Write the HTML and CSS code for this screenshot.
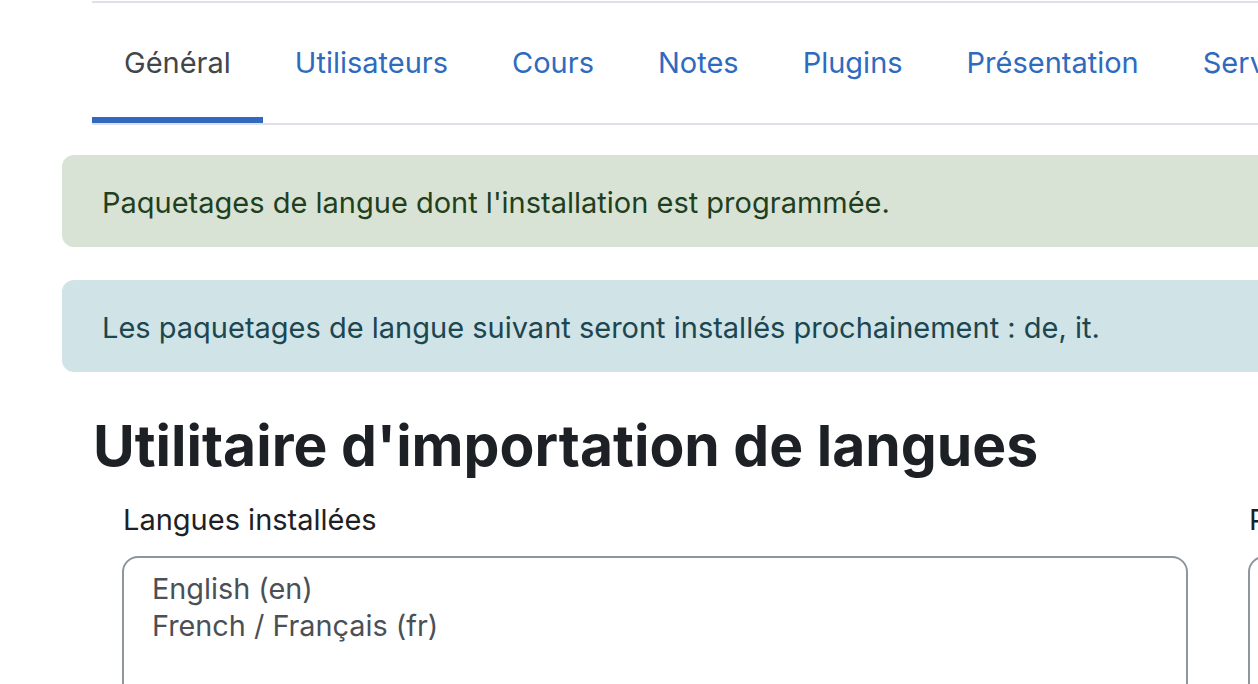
FILE: index.html
```html
<!DOCTYPE html>
<html lang="fr">
<head>
    <meta charset="UTF-8">
    <meta name="viewport" content="width=device-width, initial-scale=1.0">
    <title>Utilitaire d'importation de langues</title>
    <link rel="stylesheet" href="styles.css">
</head>
<body>
    <div class="page">
        <nav class="secondary-nav">
            <ul class="nav-tabs">
                <li><a class="nav-link active" href="#">Général</a></li>
                <li><a class="nav-link" href="#">Utilisateurs</a></li>
                <li><a class="nav-link" href="#">Cours</a></li>
                <li><a class="nav-link" href="#">Notes</a></li>
                <li><a class="nav-link" href="#">Plugins</a></li>
                <li><a class="nav-link" href="#">Présentation</a></li>
                <li><a class="nav-link" href="#">Serveur</a></li>
                <li><a class="nav-link" href="#">Rapports</a></li>
            </ul>
        </nav>

        <main class="main">
            <div class="alert alert-success">Paquetages de langue dont l'installation est programmée.</div>
            <div class="alert alert-info">Les paquetages de langue suivant seront installés prochainement : de, it.</div>

            <h2 class="page-title">Utilitaire d'importation de langues</h2>

            <div class="lang-row">
                <div class="lang-col">
                    <label class="lang-label">Langues installées</label>
                    <div class="lang-list" role="listbox">
                        <div class="lang-option">English (en)</div>
                        <div class="lang-option">French / Français (fr)</div>
                    </div>
                </div>
                <div class="lang-col">
                    <label class="lang-label">Paquetages de langue disponibles</label>
                    <div class="lang-list" role="listbox">
                        <div class="lang-option">Afaraf (aa)</div>
                        <div class="lang-option">Afrikaans (af)</div>
                    </div>
                </div>
            </div>
        </main>
    </div>
</body>
</html>
```

FILE: styles.css
```css
* {
    margin: 0;
    padding: 0;
    box-sizing: border-box;
}

body {
    font-family: Inter, "Noto Sans", sans-serif;
    color: #1d2125;
    background: #fff;
    overflow: hidden;
    padding-top: 1px;
}

.page {
    width: 2600px;
    padding-left: 62px;
}

.secondary-nav {
    margin-left: 30px;
    border-top: 2px solid #dee2e6;
}

.nav-tabs {
    list-style: none;
    display: flex;
    border-bottom: 2px solid #dee2e6;
}

.nav-link {
    display: flex;
    align-items: center;
    height: 120px;
    padding: 4px 32px 0;
    font-size: 29px;
    color: #2e6bbf;
    text-decoration: none;
    border-bottom: 6px solid transparent;
}

.nav-link.active {
    color: #42464b;
    border-bottom-color: #3268bd;
}

.main {
    padding-top: 30px;
}

.alert {
    width: 1400px;
    padding: 26px 40px 22px;
    margin-bottom: 33px;
    border-radius: 12px;
    font-size: 29px;
    line-height: 44px;
}

.alert-success {
    background: #d8e3d6;
    color: #1f3f1d;
}

.alert-info {
    background: #d0e3e7;
    color: #1c4650;
}

.page-title {
    margin: 38px 0 0 31px;
    font-size: 57px;
    font-weight: 700;
    line-height: 72px;
}

.lang-row {
    display: flex;
    margin-top: 15px;
}

.lang-col {
    width: 1126px;
    flex-shrink: 0;
    padding: 0 30px;
}

.lang-col:first-child {
    padding-left: 60px;
    width: 1156px;
}

.lang-label {
    display: block;
    font-size: 29px;
    line-height: 45px;
    margin-bottom: 14px;
    padding-left: 1px;
}

.lang-list {
    height: 200px;
    border: 2px solid #8f959e;
    border-radius: 16px;
    padding: 12px 28px;
    font-size: 28.8px;
    line-height: 37px;
    color: #4b5056;
}
```
